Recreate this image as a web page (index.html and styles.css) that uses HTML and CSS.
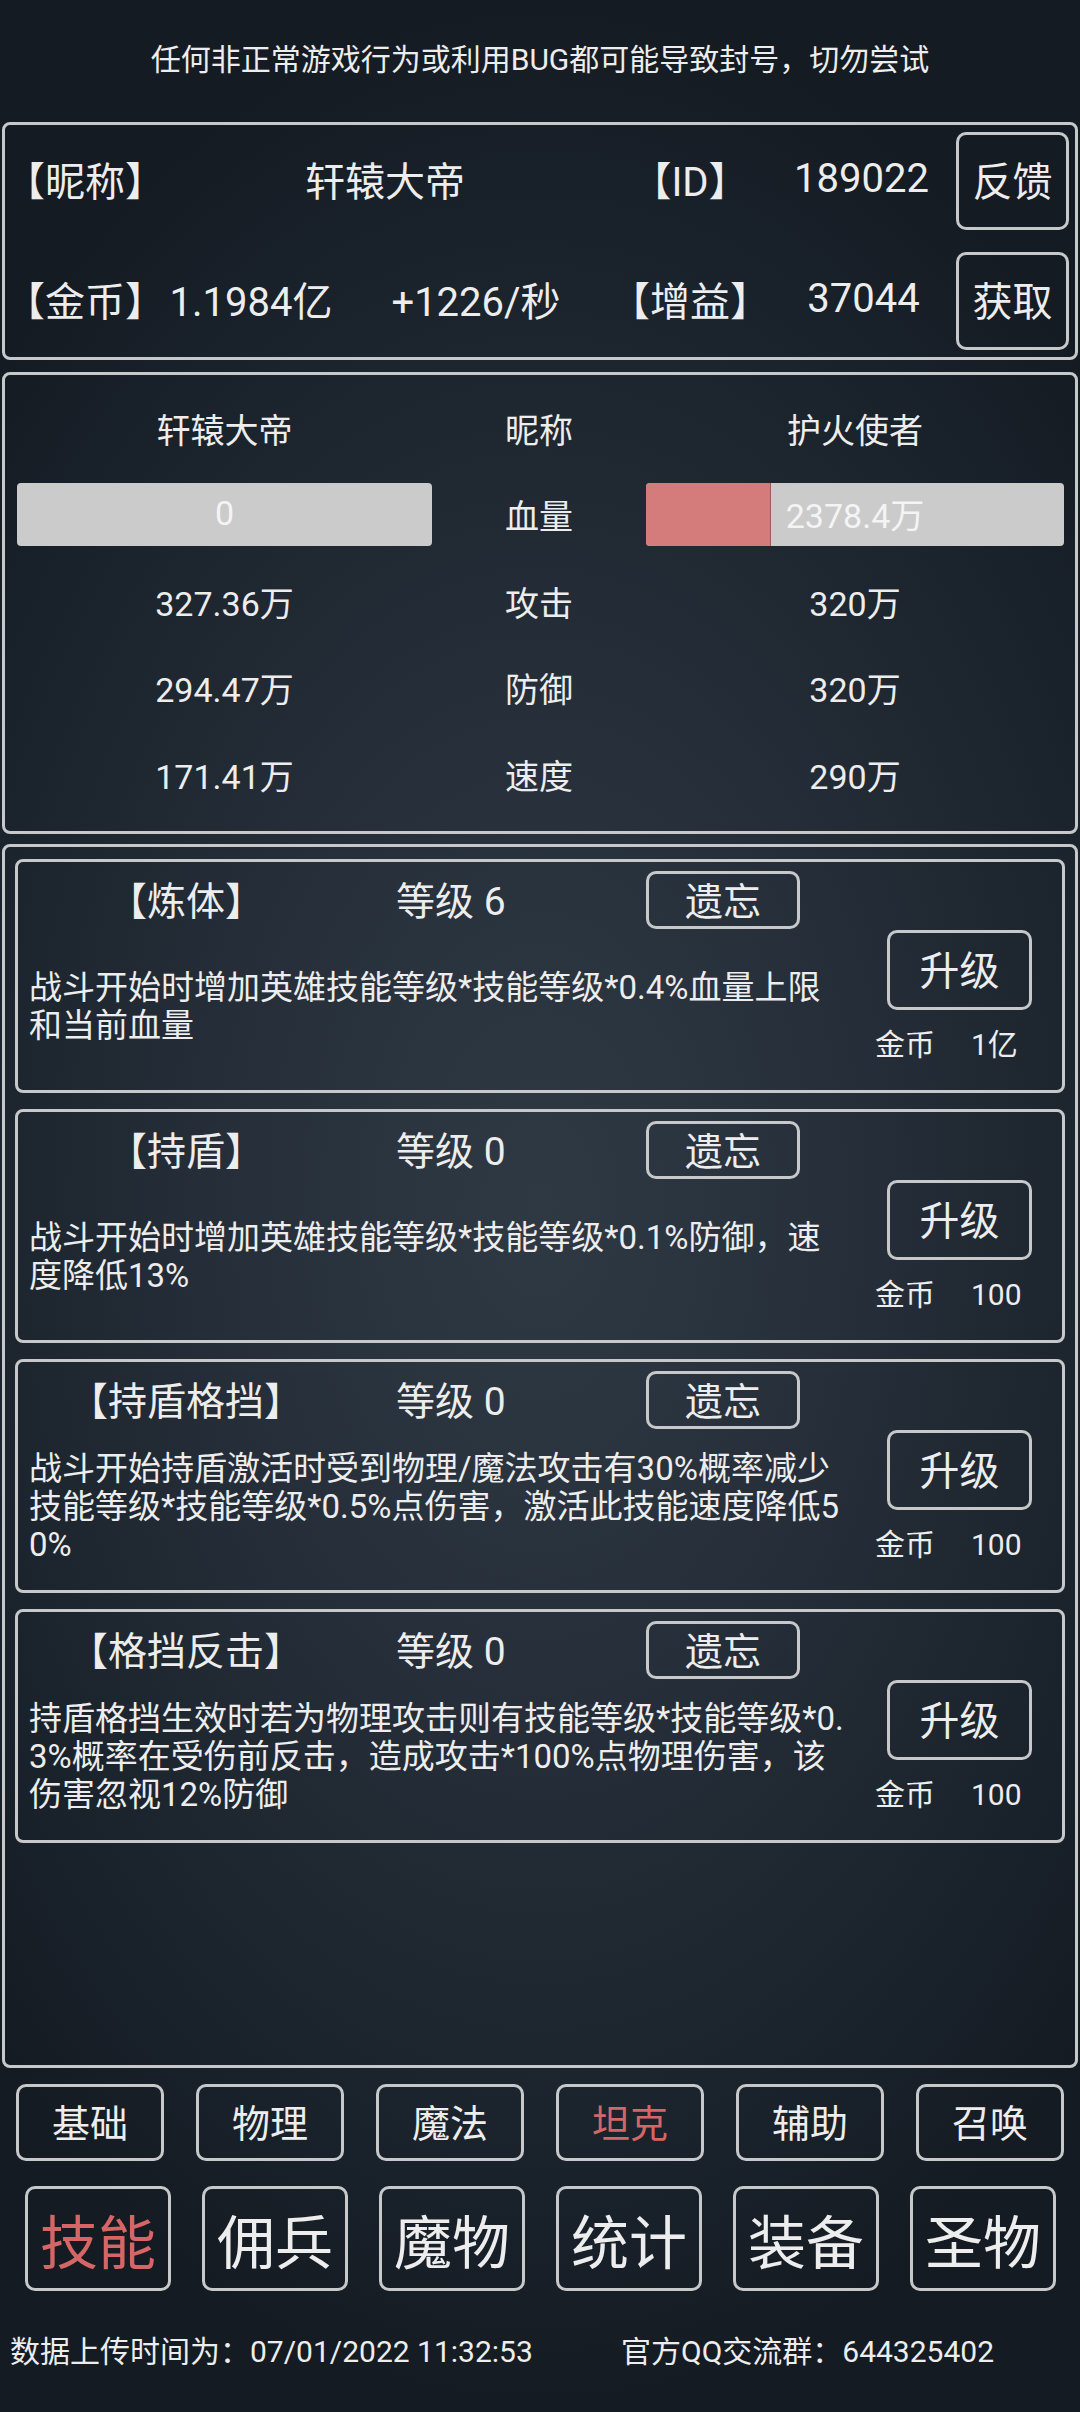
FILE: index.html
```html
<!DOCTYPE html>
<html lang="zh">
<head>
<meta charset="utf-8">
<title>技能</title>
<link rel="stylesheet" href="styles.css">
</head>
<body>
<div class="screen">
  <div class="notice">任何非正常游戏行为或利用BUG都可能导致封号，切勿尝试</div>

  <section class="panel account">
    <div class="acc-row row-a">
      <span>【昵称】</span><span>轩辕大帝</span><span>【ID】</span><span>189022</span><div class="btn acc-btn">反馈</div>
    </div>
    <div class="acc-row row-b">
      <span>【金币】</span><span>1.1984亿</span><span>+1226/秒</span><span>【增益】</span><span>37044</span><div class="btn acc-btn">获取</div>
    </div>
  </section>

  <section class="panel battle">
    <div class="b-row"><span>轩辕大帝</span><span>昵称</span><span>护火使者</span></div>
    <div class="b-row">
      <div class="hp"><span class="hp-text">0</span></div>
      <span>血量</span>
      <div class="hp"><div class="hp-fill" style="width:30%"></div><span class="hp-text">2378.4万</span></div>
    </div>
    <div class="b-row"><span>327.36万</span><span>攻击</span><span>320万</span></div>
    <div class="b-row"><span>294.47万</span><span>防御</span><span>320万</span></div>
    <div class="b-row"><span>171.41万</span><span>速度</span><span>290万</span></div>
  </section>

  <section class="panel skills">
    <div class="card">
      <div class="card-head"><span class="sk-title">【炼体】</span><span class="sk-level">等级 6</span><div class="btn forget">遗忘</div></div>
      <div class="card-body">
        <p class="desc">战斗开始时增加英雄技能等级*技能等级*0.4%血量上限<br>和当前血量</p>
        <div class="up-col"><div class="btn up">升级</div><div class="cost"><span>金币</span><span>1亿</span></div></div>
      </div>
    </div>
    <div class="card">
      <div class="card-head"><span class="sk-title">【持盾】</span><span class="sk-level">等级 0</span><div class="btn forget">遗忘</div></div>
      <div class="card-body">
        <p class="desc">战斗开始时增加英雄技能等级*技能等级*0.1%防御，速<br>度降低13%</p>
        <div class="up-col"><div class="btn up">升级</div><div class="cost"><span>金币</span><span>100</span></div></div>
      </div>
    </div>
    <div class="card">
      <div class="card-head"><span class="sk-title">【持盾格挡】</span><span class="sk-level">等级 0</span><div class="btn forget">遗忘</div></div>
      <div class="card-body">
        <p class="desc">战斗开始持盾激活时受到物理/魔法攻击有30%概率减少<br>技能等级*技能等级*0.5%点伤害，激活此技能速度降低5<br>0%</p>
        <div class="up-col"><div class="btn up">升级</div><div class="cost"><span>金币</span><span>100</span></div></div>
      </div>
    </div>
    <div class="card">
      <div class="card-head"><span class="sk-title">【格挡反击】</span><span class="sk-level">等级 0</span><div class="btn forget">遗忘</div></div>
      <div class="card-body">
        <p class="desc">持盾格挡生效时若为物理攻击则有技能等级*技能等级*0.<br>3%概率在受伤前反击，造成攻击*100%点物理伤害，该<br>伤害忽视12%防御</p>
        <div class="up-col"><div class="btn up">升级</div><div class="cost"><span>金币</span><span>100</span></div></div>
      </div>
    </div>
  </section>

  <nav class="subtabs">
    <div class="btn sub">基础</div>
    <div class="btn sub">物理</div>
    <div class="btn sub">魔法</div>
    <div class="btn sub active">坦克</div>
    <div class="btn sub">辅助</div>
    <div class="btn sub">召唤</div>
  </nav>

  <nav class="maintabs">
    <div class="btn main active">技能</div>
    <div class="btn main">佣兵</div>
    <div class="btn main">魔物</div>
    <div class="btn main">统计</div>
    <div class="btn main">装备</div>
    <div class="btn main">圣物</div>
  </nav>

  <footer class="footer">
    <span>数据上传时间为：07/01/2022 11:32:53</span>
    <span>官方QQ交流群：644325402</span>
  </footer>
</div>
</body>
</html>
```

FILE: styles.css
```css
* { box-sizing: border-box; }

html, body {
  margin: 0;
  padding: 0;
}

body {
  width: 1080px;
  height: 2412px;
  overflow: hidden;
  background: #161c24;
  font-family: Roboto, "Noto Sans CJK SC", sans-serif;
  color: #ededed;
}

.screen {
  width: 1080px;
  height: 2412px;
  background: radial-gradient(ellipse 70% 50% at 50% 50%, #2f3944 0%, #252e38 45%, #182029 85%, #151b22 100%);
}

.notice {
  height: 122px;
  padding-top: 42px;
  font-size: 30px;
  line-height: 36px;
  text-align: center;
}

.panel {
  margin: 0 2px;
  border: 3px solid #c6c8ca;
  border-radius: 8px;
}

.btn {
  border: 3px solid #c6c8ca;
  border-radius: 10px;
  display: flex;
  align-items: center;
  justify-content: center;
  padding-bottom: 4px;
}

/* account panel */
.account {
  height: 238px;
  padding: 7px 0;
  display: flex;
  flex-direction: column;
  gap: 22px;
}

.acc-row {
  height: 98px;
  display: grid;
  align-items: center;
  font-size: 40px;
  text-align: center;
}

.acc-row span {
  padding-bottom: 5px;
}

.row-a { grid-template-columns: 152px 456px 154px 189px 113px; }
.row-b { grid-template-columns: 154px 184px 266px 162px 185px 113px; }

.acc-btn {
  height: 98px;
  font-size: 40px;
}

/* battle panel */
.battle {
  margin-top: 12px;
  height: 462px;
  padding: 10px 11px 9px 12px;
}

.b-row {
  height: 86.5px;
  display: grid;
  grid-template-columns: 415px 214px 418px;
  align-items: center;
  text-align: center;
  font-size: 34px;
}

.hp {
  position: relative;
  height: 63px;
  background: #cbcbcb;
  border-radius: 4px;
  overflow: hidden;
  display: flex;
  align-items: center;
  justify-content: center;
}

.hp-fill {
  position: absolute;
  left: 0;
  top: 0;
  bottom: 0;
  background: #d47b7b;
  border-right: 1px solid #9c5a5a;
}

.hp-text {
  position: relative;
  color: #f4f4f4;
  padding-bottom: 3px;
}

/* skills panel */
.skills {
  margin-top: 10px;
  height: 1224px;
  padding: 12px 10px;
  display: flex;
  flex-direction: column;
  gap: 16px;
}

.card {
  height: 234px;
  border: 3px solid #c6c8ca;
  border-radius: 8px;
  display: flex;
  flex-direction: column;
}

.card-head {
  margin-top: 9px;
  height: 58px;
  display: flex;
  align-items: center;
  font-size: 39px;
}

.sk-title {
  width: 336px;
  text-align: center;
  padding-bottom: 4px;
}

.sk-level {
  width: 292px;
  padding-left: 42px;
  padding-bottom: 4px;
}

.forget {
  width: 154px;
  height: 58px;
  font-size: 38px;
}

.card-body {
  flex: 1;
  display: flex;
}

.desc {
  margin: 0;
  width: 854px;
  padding-left: 11px;
  padding-bottom: 5px;
  font-size: 33px;
  line-height: 38px;
  align-self: center;
  white-space: nowrap;
}

.up-col {
  width: 190px;
  padding-top: 1px;
}

.up {
  margin-left: 15px;
  width: 145px;
  height: 80px;
  font-size: 40px;
}

.cost {
  margin-top: 17px;
  margin-left: 3px;
  display: flex;
  gap: 36px;
  font-size: 30px;
  line-height: 36px;
}

/* tabs */
.subtabs {
  margin-top: 16px;
  padding-left: 16px;
  display: flex;
  gap: 32px;
}

.sub {
  width: 148px;
  height: 77px;
  font-size: 38px;
}

.maintabs {
  margin-top: 25px;
  padding-left: 25px;
  display: flex;
  gap: 31px;
}

.main {
  width: 146px;
  height: 105px;
  font-size: 58px;
  padding-bottom: 0;
}

.active {
  color: #d66565;
}

.footer {
  padding-top: 43px;
  padding-left: 10px;
  display: grid;
  grid-template-columns: 611px auto;
  font-size: 30px;
  line-height: 36px;
}
```
